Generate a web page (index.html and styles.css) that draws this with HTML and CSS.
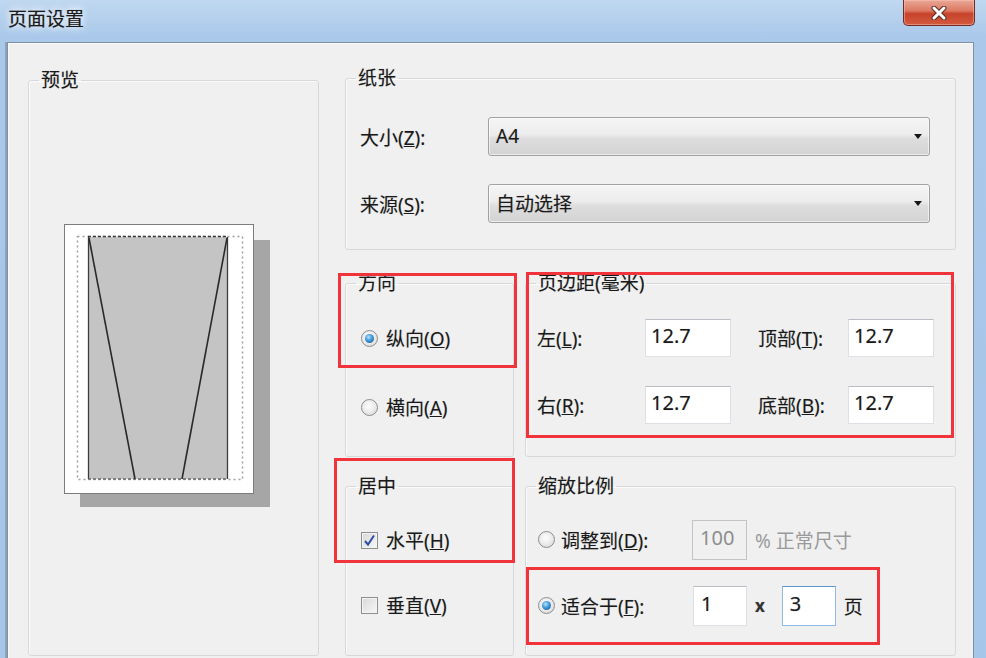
FILE: index.html
```html
<!DOCTYPE html>
<html lang="zh-CN">
<head>
<meta charset="utf-8">
<title>页面设置</title>
<link rel="stylesheet" href="styles.css">
</head>
<body>
<div class="window">
  <div class="titlebar">
    <span class="title">页面设置</span>
    <button class="close" type="button" aria-label="关闭">
      <svg width="18" height="14" viewBox="0 0 18 14">
        <path d="M4 2 L14 12 M14 2 L4 12" stroke="#5a2a24" stroke-width="5" stroke-linecap="round"/>
        <path d="M4 2 L14 12 M14 2 L4 12" stroke="#ffffff" stroke-width="3" stroke-linecap="round"/>
      </svg>
    </button>
  </div>

  <div class="client">
    <fieldset class="group preview">
      <legend>预览</legend>
      <svg class="page-preview" width="208" height="285" viewBox="0 0 208 285">
        <rect x="16" y="16" width="190" height="267" fill="#a6a6a6"/>
        <rect x="0.5" y="0.5" width="189" height="269" fill="#ffffff" stroke="#7c7c7c"/>
        <rect x="13.5" y="12.5" width="165" height="243" fill="none" stroke="#a0a0a0" stroke-width="1.5" stroke-dasharray="2 3"/>
        <rect x="24" y="13" width="140" height="242" fill="#c4c4c4"/>
        <line x1="24.5" y1="13" x2="24.5" y2="255" stroke="#3c3c3c" stroke-width="1.3"/>
        <line x1="163.5" y1="13" x2="163.5" y2="255" stroke="#3c3c3c" stroke-width="1.3"/>
        <line x1="24" y1="12.5" x2="164" y2="12.5" stroke="#3a3a3a" stroke-width="1.3" stroke-dasharray="3 2"/>
        <line x1="24" y1="255" x2="164" y2="255" stroke="#6a6a6a" stroke-width="1.3" stroke-dasharray="3 2"/>
        <line x1="25" y1="14" x2="71" y2="255" stroke="#2a2a2a" stroke-width="1.6"/>
        <line x1="163" y1="14" x2="118" y2="255" stroke="#2a2a2a" stroke-width="1.6"/>
      </svg>
    </fieldset>

    <div class="right">
      <fieldset class="group paper">
        <legend>纸张</legend>
        <div class="paper-body">
          <div class="field-row">
            <span class="lbl">大小(<u>Z</u>):</span>
            <div class="combo"><span>A4</span><i class="arrow"></i></div>
          </div>
          <div class="field-row">
            <span class="lbl">来源(<u>S</u>):</span>
            <div class="combo"><span>自动选择</span><i class="arrow"></i></div>
          </div>
        </div>
      </fieldset>

      <div class="row row-mid">
        <fieldset class="group small">
          <legend>方向</legend>
          <div class="opt-body">
            <div class="opt"><span class="radio on"></span><span class="opt-text">纵向(<u>O</u>)</span></div>
            <div class="opt"><span class="radio"></span><span class="opt-text">横向(<u>A</u>)</span></div>
          </div>
        </fieldset>
        <fieldset class="group wide">
          <legend>页边距(毫米)</legend>
          <div class="margin-grid">
            <span class="lbl">左(<u>L</u>):</span>
            <input class="tb" type="text" value="12.7" readonly>
            <span class="lbl lbl-2">顶部(<u>T</u>):</span>
            <input class="tb" type="text" value="12.7" readonly>
            <span class="lbl">右(<u>R</u>):</span>
            <input class="tb" type="text" value="12.7" readonly>
            <span class="lbl lbl-2">底部(<u>B</u>):</span>
            <input class="tb" type="text" value="12.7" readonly>
          </div>
        </fieldset>
      </div>

      <div class="row row-bottom">
        <fieldset class="group small">
          <legend>居中</legend>
          <div class="opt-body center-body">
            <div class="opt">
              <span class="check on">
                <svg width="13" height="13" viewBox="0 0 13 13"><path d="M2 7 L5 10.5 L11 1.5" fill="none" stroke="#2b4ea3" stroke-width="2"/></svg>
              </span>
              <span class="opt-text">水平(<u>H</u>)</span>
            </div>
            <div class="opt"><span class="check"></span><span class="opt-text">垂直(<u>V</u>)</span></div>
          </div>
        </fieldset>
        <fieldset class="group wide">
          <legend>缩放比例</legend>
          <div class="scale-body">
            <div class="scale-row">
              <div class="scale-opt"><span class="radio"></span><span class="opt-text">调整到(<u>D</u>):</span></div>
              <input class="tb tb-sm disabled" type="text" value="100" disabled>
              <span class="muted">% 正常尺寸</span>
            </div>
            <div class="scale-row">
              <div class="scale-opt fit"><span class="radio on"></span><span class="opt-text">适合于(<u>F</u>):</span></div>
              <input class="tb tb-sm tb-a" type="text" value="1" readonly>
              <span class="times">x</span>
              <input class="tb tb-sm focus" type="text" value="3" readonly>
              <span class="unit">页</span>
            </div>
          </div>
        </fieldset>
      </div>
    </div>
  </div>

  <div class="mark mark-orient"></div>
  <div class="mark mark-margins"></div>
  <div class="mark mark-center"></div>
  <div class="mark mark-fit"></div>
</div>
</body>
</html>
```

FILE: styles.css
```css
* { box-sizing: border-box; }

html, body {
  margin: 0;
  padding: 0;
}

body {
  width: 986px;
  height: 658px;
  overflow: hidden;
  font-family: "Noto Sans", "Noto Sans CJK SC", sans-serif;
  font-size: 19px;
  color: #1a1a1a;
  background: #a8c8ea;
}

.window {
  position: relative;
  width: 986px;
  height: 658px;
  background: linear-gradient(180deg, #c0d8f0 0px, #a9c8ea 38px, #a6c6e9 100%);
}

/* ---------- title bar ---------- */
.titlebar {
  height: 42px;
  display: flex;
  align-items: flex-start;
  justify-content: space-between;
}

.title {
  margin: 7px 0 0 8px;
  line-height: 24px;
  font-size: 19px;
  color: #1b1b1b;
  text-shadow: 0 0 1px rgba(0, 0, 0, 0.35), 0 0 6px #ffffff, 0 0 10px rgba(255, 255, 255, 0.8);
}

.close {
  width: 72px;
  height: 26px;
  margin-right: 11px;
  padding: 0;
  border: 1px solid #6e2c24;
  border-top: none;
  border-radius: 0 0 5px 5px;
  background: linear-gradient(180deg, #eaa896 0%, #dc7a64 42%, #c7432b 55%, #d35a3e 100%);
  box-shadow: inset 0 0 0 1px rgba(255, 200, 190, 0.45);
  display: flex;
  align-items: center;
  justify-content: center;
}

/* ---------- client area ---------- */
.client {
  margin-left: 7px;
  width: 967px;
  height: 616px;
  border: 1px solid #7f90a2;
  border-bottom: none;
  background: #f0f0f0;
  box-shadow: -2px 0 0 #8fa3b8, inset 1px 1px 0 #fafafa;
  padding: 24px 0 2px 20px;
  display: flex;
  gap: 26px;
  overflow: hidden;
  text-shadow: 0 0 1px rgba(0, 0, 0, 0.25);
}

.group {
  margin: 0;
  padding: 0;
  min-width: 0;
  border: 1px solid #d6d9dc;
  border-radius: 3px;
  box-shadow: inset 1px 1px 0 #fbfbfb;
}

.group legend {
  margin-left: 10px;
  padding: 0 2px;
  line-height: 22px;
  font-size: 19px;
  color: #1a1a1a;
}

u { text-decoration-thickness: 1px; text-underline-offset: 1px; }

/* preview */
.preview {
  width: 291px;
  margin-top: 2px;
  flex: none;
}

.page-preview {
  display: block;
  margin: 133px 0 0 35px;
}

/* right column */
.right {
  width: 611px;
  flex: none;
  display: flex;
  flex-direction: column;
}

.paper-body {
  padding: 28px 0 26px 14px;
  display: flex;
  flex-direction: column;
  gap: 28px;
}

.field-row {
  display: flex;
  align-items: center;
  height: 39px;
}

.lbl {
  width: 128px;
  flex: none;
  white-space: nowrap;
}

.combo {
  width: 442px;
  height: 39px;
  border: 1px solid #a2a2a2;
  border-radius: 3px;
  background: linear-gradient(180deg, #f5f5f5 0%, #ececec 45%, #dedede 55%, #d3d3d3 100%);
  box-shadow: inset 0 0 0 1px rgba(255, 255, 255, 0.55);
  display: flex;
  align-items: center;
  justify-content: space-between;
  padding: 0 7px 2px 7px;
  color: #1a1a1a;
}

.arrow {
  width: 0;
  height: 0;
  border-left: 4.5px solid transparent;
  border-right: 4.5px solid transparent;
  border-top: 5px solid #151515;
  margin-top: 2px;
}

.row {
  display: flex;
  gap: 11px;
}

.row-mid { margin-top: 22px; }

.row-bottom {
  margin-top: 18px;
  flex: 1;
}

.small { width: 169px; flex: none; }
.wide { width: 431px; flex: none; }

/* radio / checkbox options */
.opt-body {
  padding: 26px 0 31px 15px;
  display: flex;
  flex-direction: column;
  gap: 33px;
}

.center-body {
  padding-top: 25px;
  gap: 29px;
}

.opt {
  height: 36px;
  display: flex;
  align-items: center;
}

.opt-text {
  margin-left: 8px;
  white-space: nowrap;
}

.radio {
  position: relative;
  flex: none;
  width: 17px;
  height: 17px;
  border-radius: 50%;
  border: 1px solid #8c8d8e;
  background: radial-gradient(circle at 45% 40%, #fefefe 0%, #e9e9e9 55%, #cfcfcf 100%);
}

.radio.on::after {
  content: "";
  position: absolute;
  left: 3px;
  top: 3px;
  width: 9px;
  height: 9px;
  border-radius: 50%;
  background: radial-gradient(circle at 40% 35%, #b4e4ff 0%, #3f97d8 45%, #114f86 100%);
}

.check {
  flex: none;
  width: 17px;
  height: 17px;
  border: 1px solid #8e8f90;
  background: linear-gradient(135deg, #d9d9d9 0%, #f7f7f7 100%);
  box-shadow: inset 0 0 0 1px #f3f3f3;
  display: flex;
  align-items: center;
  justify-content: center;
}

/* margins grid */
.margin-grid {
  display: grid;
  grid-template-columns: 108px 86px 117px 86px;
  grid-auto-rows: 38px;
  row-gap: 29px;
  align-items: center;
  padding: 25px 0 32px 11px;
}

.margin-grid .lbl { width: auto; }
.margin-grid .lbl-2 { padding-left: 27px; }

.tb {
  width: 86px;
  height: 38px;
  margin: 0;
  border: 1px solid #dde0e4;
  border-top-color: #b9bdc3;
  background: #ffffff;
  font-family: "Noto Sans", "Noto Sans CJK SC", sans-serif;
  font-size: 20px;
  color: #1a1a1a;
  text-shadow: 0 0 1px rgba(0, 0, 0, 0.3);
  padding: 0 0 5px 5px;
  outline: none;
}

/* scale */
.scale-body {
  padding: 23px 0 0 12px;
  display: flex;
  flex-direction: column;
  gap: 27px;
}

.scale-row {
  height: 39px;
  display: flex;
  align-items: center;
}

.scale-opt {
  width: 154px;
  flex: none;
  display: flex;
  align-items: center;
}

.scale-opt .opt-text { margin-left: 6px; }
.scale-opt.fit { width: 155px; }

.tb-sm {
  width: 55px;
  height: 40px;
  padding-left: 7px;
}

.tb-a { width: 54px; }

.tb.disabled {
  background: #f0f0f0;
  border-color: #c3c3c3;
  color: #8d8d8d;
  text-shadow: none;
}

.tb.focus {
  width: 54px;
  border-color: #8fbbe6;
  border-top-color: #5d95cc;
}

.muted {
  margin-left: 8px;
  color: #9a9a9a;
  text-shadow: none;
  white-space: nowrap;
}

.times {
  margin: 0 17px 0 8px;
  font-size: 17px;
  font-weight: bold;
  color: #333;
}

.unit { margin-left: 8px; }

/* red annotation boxes */
.mark {
  position: absolute;
  border: 3px solid #f1343c;
  pointer-events: none;
}

.mark-orient { left: 338px; top: 273px; width: 179px; height: 95px; }
.mark-margins { left: 526px; top: 272px; width: 428px; height: 166px; }
.mark-center { left: 334px; top: 458px; width: 181px; height: 105px; }
.mark-fit { left: 526px; top: 567px; width: 354px; height: 78px; }
```
